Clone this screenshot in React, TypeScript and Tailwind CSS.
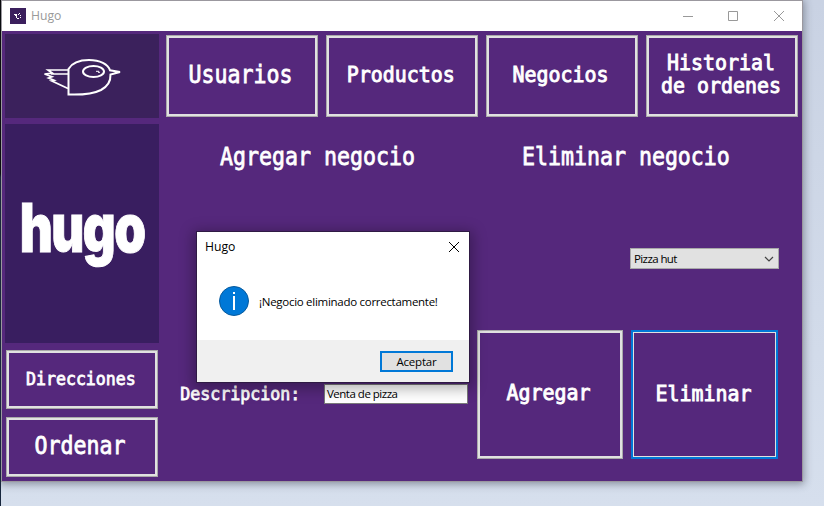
import type { ReactNode } from "react";

const mono =
  "inline-block whitespace-pre text-center text-white font-['DejaVu_Sans_Mono',monospace]";
const large = `${mono} text-[24.7px] leading-[28px] scale-x-[0.874] [-webkit-text-stroke:0.8px_white]`;
const medium = `${mono} text-[20.6px] leading-[23px] scale-x-[0.968] [-webkit-text-stroke:0.9px_white]`;
const small = `${mono} text-[17.8px] leading-[20px] scale-x-[0.933] [-webkit-text-stroke:0.8px_white]`;

function Tile({ className, children }: { className: string; children: ReactNode }) {
  return (
    <button className={`flex shrink-0 items-center justify-center border border-[#a9a9a9] pr-[3px] pb-[2px] shadow-[inset_0_0_0_2px_#e1e1e1] ${className}`}>
      {children}
    </button>
  );
}

function Bird() {
  return (
    <svg width="84" height="46" viewBox="40 52 84 46" fill="none" stroke="white" strokeWidth="2">
      <path d="M68.500 93.500V68C72 61.800 80 59 89 59c11 0 19 4 21 10.300L120 71l-9.500 2.500c.3 7-3 12-9.500 15.500C93 93 82 94 68.500 93.500Z" />
      <path strokeWidth="1.700" d="M68.500 69H48l4.500 3.200-8 .8 7.500 2.700-3.500 1.300 5.500 2.300-2.500.5L68 87.500M51 73h17.500" />
      <ellipse cx="93.500" cy="70.500" rx="10.500" ry="5.500" />
      <path d="M96 70.300h3M98 71.300h2" strokeWidth="1" />
    </svg>
  );
}

export default function App() {
  return (
    <div className="relative flex h-[506px] w-[824px] overflow-hidden bg-linear-to-b from-[#c9d2e3] to-[#d6dfed] font-['Open_Sans',sans-serif]">
      <div className="w-px shrink-0 bg-linear-to-b from-black from-[34%] to-[#16253c] to-[35%]" />
      <div className="h-[482px] w-[802px] shrink-0 border border-[#9b989f] bg-[#55287c] shadow-[0_1px_8px_1px_rgba(40,45,60,0.45)]">
        <header className="flex h-[30px] items-center bg-white pl-2">
          <svg width="16" height="16" viewBox="0 0 16 16">
            <path fill="#3b1f5d" d="M0 0h16v16H0z" />
            <path fill="white" d="M4 6h3v1H4zM5 7h2v1H5zM6 8h1v2H6zM9 5h1v1H9zM8 6h1v1H8zM10 7h1v1h-1zM7 10h2v1H7zM10 9h1v1h-1z" />
          </svg>
          <span className="ml-[5px] pt-px text-[12.2px] text-[#999]">Hugo</span>
          <svg className="ml-auto mr-[17px]" width="103" height="12" viewBox="0 0 103 12" fill="none" stroke="#999">
            <path d="M1 6.500h10M46.500 1.500h9v9h-9zM92 1l10 10M102 1 92 11" />
          </svg>
        </header>

        <div className="flex h-[450px] gap-[7px] pl-[3px]">
          <aside className="flex w-[154px] shrink-0 flex-col pt-[3px]">
            <div className="flex h-[84px] items-center justify-center bg-[#3b215c]"><Bird /></div>
            <div className="mt-[6px] flex h-[219px] items-center justify-center bg-[#391e60] pb-[13px]">
              <span className="scale-x-[0.76] text-[67px] leading-none font-black tracking-[-2px] text-white [-webkit-text-stroke:1px_white] font-['Inter',sans-serif]">hugo</span>
            </div>
            <Tile className="mt-[7px] ml-px h-[59px] w-[152px]"><span className={small}>Direcciones</span></Tile>
            <Tile className="mt-[8px] ml-px h-[60px] w-[152px]"><span className={large}>Ordenar</span></Tile>
          </aside>

          <main className="flex w-[633px] shrink-0 flex-col pt-[4px]">
            <nav className="flex gap-2">
              <Tile className="h-[82px] w-[152px]"><span className={large}>Usuarios</span></Tile>
              <Tile className="h-[82px] w-[152px]"><span className={medium}>Productos</span></Tile>
              <Tile className="h-[82px] w-[152px]"><span className={medium}>Negocios</span></Tile>
              <Tile className="h-[82px] w-[152px]"><span className={medium}>{"Historial\nde ordenes"}</span></Tile>
            </nav>
            <div className="mt-[26px] flex h-[28px]">
              <h2 className="flex w-[303px] justify-center"><span className={large}>Agregar negocio</span></h2>
              <h2 className="flex w-[313px] justify-center"><span className={large}>Eliminar negocio</span></h2>
            </div>
            <div className="mt-[77px] ml-[464px] flex h-[21px] w-[149px] items-center justify-between border border-[#a9a9a9] bg-[#e1e1e1] pr-1 pl-[3px]">
              <span className="text-[11.5px] tracking-[-0.6px]">Pizza hut</span>
              <svg width="10" height="6" viewBox="0 0 10 6" fill="none" stroke="#444" strokeWidth="1.200"><path d="m1 1 4 4 4-4" /></svg>
            </div>
            <div className="mt-[61px] flex h-[129px]">
              <div className="flex w-[311px] shrink-0 pt-[54px]">
                <label className="ml-[15px] flex w-[119px] shrink-0 justify-center"><span className={small}>Descripcion:</span></label>
                <div className="ml-[24px] flex h-[20px] w-[144px] shrink-0 items-center border border-[#7a7a7a] bg-white pl-[2px] text-[11.5px] tracking-[-0.5px]">Venta de pizza</div>
              </div>
              <Tile className="h-[129px] w-[146px]"><span className={medium}>Agregar</span></Tile>
              <button className="ml-2 flex h-[129px] w-[147px] shrink-0 items-center justify-center border-2 border-[#0078d7] pr-[2px] pb-px shadow-[inset_0_0_0_1px_#e1e1e1]"><span className={medium}>Eliminar</span></button>
            </div>
          </main>
        </div>
      </div>

      <section role="dialog" className="absolute top-[231px] left-[196px] flex h-[152px] w-[274px] flex-col border border-[#2f1a44] bg-white shadow-[0_3px_13px_3px_rgba(0,0,0,0.3)]">
        <div className="flex h-[29px] items-center justify-between pr-[9px] pl-2">
          <span className="pt-[2px] text-[12.2px]">Hugo</span>
          <svg width="12" height="12" viewBox="0 0 12 12" stroke="black" strokeWidth="1"><path d="m1 1 10 10M11 1 1 11" /></svg>
        </div>
        <div className="flex h-[79px] items-center pl-[22px]">
          <svg width="30" height="30" viewBox="0 0 30 30">
            <circle cx="15" cy="15" r="14.500" fill="#0078d7" stroke="#075a9d" />
            <path d="M14 6h2v2h-2zM14 10h2v14h-2z" fill="white" />
          </svg>
          <span className="ml-[10px] pt-[2px] text-[11.5px] tracking-[-0.28px] whitespace-nowrap">¡Negocio eliminado correctamente!</span>
        </div>
        <footer className="flex h-[42px] items-center justify-end bg-[#f0f0f0] pr-4">
          <button className="h-[21px] w-[73px] border-2 border-[#0078d7] bg-[#e1e1e1] text-[11.5px] leading-[17px] tracking-[-0.2px]">Aceptar</button>
        </footer>
      </section>
    </div>
  );
}
